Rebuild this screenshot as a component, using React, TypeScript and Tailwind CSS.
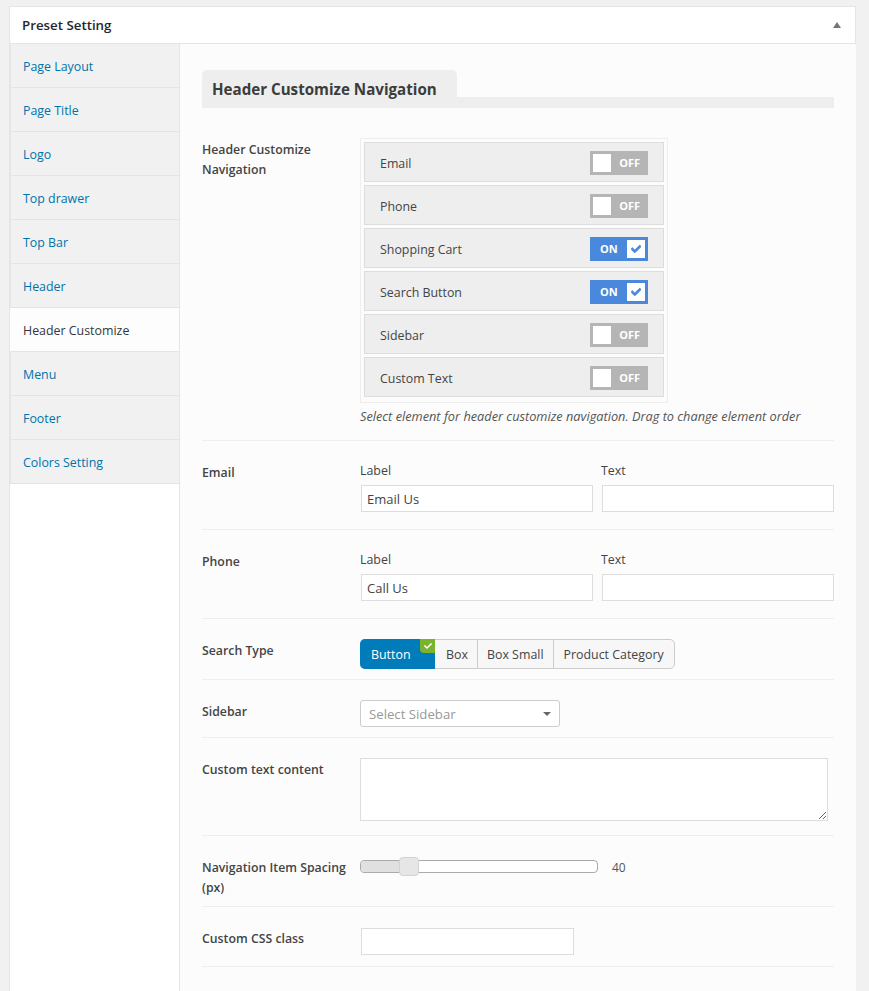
import React from "react";
import { FaCheck } from "react-icons/fa";

const TABS = ["Page Layout", "Page Title", "Logo", "Top drawer", "Top Bar", "Header", "Header Customize", "Menu", "Footer", "Colors Setting"];
const ITEMS = [
  { label: "Email", on: false },
  { label: "Phone", on: false },
  { label: "Shopping Cart", on: true },
  { label: "Search Button", on: true },
  { label: "Sidebar", on: false },
  { label: "Custom Text", on: false },
];

function Toggle({ on }: { on: boolean }) {
  if (on) {
    return (
      <div className="w-[58px] h-6 bg-[#4a88dc] flex items-center justify-between pl-[10px] pr-[3px]">
        <span className="text-[11px] font-bold text-white">ON</span>
        <span className="w-[18px] h-[18px] bg-white flex items-center justify-center">
          <FaCheck size={10} className="text-[#4a88dc] stroke-current stroke-[50]" />
        </span>
      </div>
    );
  }
  return (
    <div className="w-[58px] h-6 bg-[#b5b5b5] flex items-center justify-between pl-[3px] pr-[8px]">
      <span className="w-[18px] h-[18px] bg-white" />
      <span className="text-[11px] font-bold text-white">OFF</span>
    </div>
  );
}

function Row({ label, className, children }: { label: React.ReactNode; className: string; children: React.ReactNode }) {
  return (
    <div className={`flex border-b border-[#eeeeee] ${className}`}>
      <div className="w-[158px] shrink-0 text-[12.3px] leading-5 font-semibold text-[#444444] pr-2 pt-px">{label}</div>
      <div className="flex-1 min-w-0">{children}</div>
    </div>
  );
}

function LabelText({ value }: { value: string }) {
  return (
    <div className="flex text-[12.4px] text-[#444444]">
      <div className="w-[233px] ml-px">
        <div className="h-[20px] leading-5 -ml-px">Label</div>
        <input readOnly value={value} className="mt-[4px] w-[232px] h-[27px] bg-white border border-[#dddddd] px-[5px] text-[13px] text-[#444444] outline-none" />
      </div>
      <div className="w-[232px] ml-[8px]">
        <div className="h-[20px] leading-5 -ml-px">Text</div>
        <input readOnly value="" className="mt-[4px] w-[232px] h-[27px] bg-white border border-[#dddddd] px-[5px] outline-none" />
      </div>
    </div>
  );
}

export default function App() {
  return (
    <div className="h-[991px] overflow-hidden bg-[#f1f1f1] pt-[6px] pl-[9px] pr-[13px] font-['Open_Sans',sans-serif]">
      <div className="bg-white border border-[#e5e5e5] h-[1100px]">
        <div className="h-[37px] border-b border-[#e5e5e5] pl-3 pr-[14px] flex items-center justify-between bg-white">
          <span className="text-[13.3px] font-semibold text-[#23282d] pt-[2px]">Preset Setting</span>
          <span className="w-0 h-0 border-x-[4px] border-x-transparent border-b-[6px] border-b-[#72777c]" />
        </div>
        <div className="flex h-full">
          <ul className="w-[170px] shrink-0 self-start bg-white">
            {TABS.map((t) => (
              <li
                key={t}
                className={
                  t === "Header Customize"
                    ? "h-11 pl-[13px] pt-[4px] flex items-center text-[12.4px] text-[#32373c] bg-[#fdfdfd] border-b border-[#e5e5e5]"
                    : "h-11 pl-[12px] pt-[4px] flex items-center text-[12.4px] text-[#0073aa] bg-[#f1f1f1] border-b border-[#e5e5e5] border-r border-l"
                }
              >
                {t}
              </li>
            ))}
          </ul>
          <div className="flex-1 border-l border-[#e5e5e5] -ml-px bg-[#fcfcfc] pl-[22px] pr-[22px] pt-[26px]">
            <div className="relative h-[38px]">
              <div className="absolute left-0 right-0 bottom-0 h-[11px] bg-[#eeeeee]" />
              <div className="relative w-[255px] h-[38px] bg-[#eeeeee] rounded-t-[5px] rounded-bl-[5px] pl-[10px] flex items-center">
                <h3 className="text-[15.15px] font-bold text-[#3c3c3c]">Header Customize Navigation</h3>
              </div>
            </div>

            <Row label={<span className="block pr-6">Header Customize Navigation</span>} className="pt-[31px] h-[333px]">
              <div className="-mt-[1px]">
                <div className="w-[308px] border border-[#eeeeee] pt-[3px] px-[3px] pb-[5px] flex flex-col gap-[3px]">
                  {ITEMS.map((i) => (
                    <div key={i.label} className="h-10 pt-[2px] bg-[#eeeeee] border border-[#dddddd] px-[15px] flex items-center justify-between">
                      <span className="text-[12.4px] text-[#444444] pt-[3px]">{i.label}</span>
                      <Toggle on={i.on} />
                    </div>
                  ))}
                </div>
                <p className="mt-[3px] text-[12.75px] leading-5 italic text-[#555555]">
                  Select element for header customize navigation. Drag to change element order
                </p>
              </div>
            </Row>

            <Row label={<span className="block pt-[1px]">Email</span>} className="pt-[20px] h-[89px]">
              <LabelText value="Email Us" />
            </Row>
            <Row label={<span className="block pt-[1px]">Phone</span>} className="pt-[20px] h-[89px]">
              <LabelText value="Call Us" />
            </Row>

            <Row label={<span className="block pt-px">Search Type</span>} className="pt-5 h-[61px]">
              <div className="inline-flex h-[30px] text-[12.4px] text-[#444444] border border-[#cccccc] rounded-[5px] bg-[#f7f7f7]">
                <span className="relative -m-px h-[30px] w-[75px] pl-[11px] pt-[2px] flex items-center bg-[#007cba] text-white rounded-l-[5px]">
                  Button
                  <span className="absolute top-0 right-0 w-[15px] h-[14px] bg-[#7ab32e] rounded-bl-[4px] flex items-center justify-center">
                    <FaCheck size={8} className="text-white" />
                  </span>
                </span>
                <span className="ml-px pl-[11px] pr-[9px] pt-[2px] flex items-center border-r border-[#cccccc]">Box</span>
                <span className="px-[9px] pt-[2px] flex items-center border-r border-[#cccccc]">Box Small</span>
                <span className="px-[10px] pt-[2px] flex items-center">Product Category</span>
              </div>
            </Row>

            <Row label={<span className="block pt-px">Sidebar</span>} className="pt-5 h-[58px]">
              <div className="w-[200px] h-[27px] bg-white border border-[#cccccc] rounded-[3px] pl-2 pr-[8px] flex items-center justify-between">
                <span className="text-[13.2px] text-[#999999] pt-[2px]">Select Sidebar</span>
                <span className="w-0 h-0 border-x-[4px] border-x-transparent border-t-[4px] border-t-[#666666]" />
              </div>
            </Row>

            <Row label={<span className="block pt-px">Custom text content</span>} className="pt-5 h-[98px]">
              <textarea readOnly className="block w-[468px] h-[63px] bg-white border border-[#dddddd] outline-none" />
            </Row>

            <Row label="Navigation Item Spacing (px)" className="pt-[21px] h-[71px]">
              <div className="flex items-center h-[20px] -mt-px">
                <div className="relative w-[238px] h-[13px] bg-white border border-[#aaaaaa] rounded-[4px]">
                  <div className="h-full w-[40px] bg-[#e0e0e0] rounded-l-[4px]" />
                  <div className="absolute top-[-4px] left-[38px] w-[20px] h-[19px] bg-[#e6e6e6] border border-[#d3d3d3] rounded-[4px]" />
                </div>
                <span className="ml-[14px] text-[12px] text-[#555555] pt-[3px]">40</span>
              </div>
            </Row>

            <Row label="Custom CSS class" className="pt-[21px] h-[60px]">
              <input readOnly value="" className="block ml-px w-[213px] h-[27px] bg-white border border-[#dddddd] outline-none" />
            </Row>
          </div>
        </div>
      </div>
    </div>
  );
}
